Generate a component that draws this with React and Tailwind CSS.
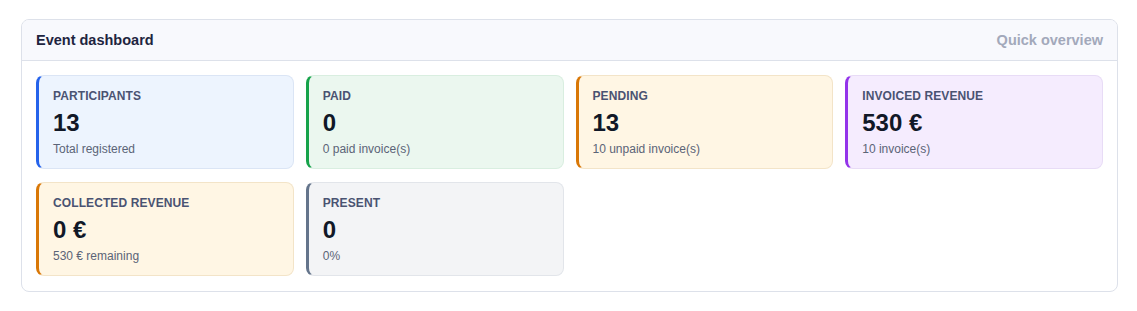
export default function App() {
  const cards = [
    { label: "Participants", value: "13", sub: "Total registered", cls: "bg-[#edf4fe] border-[#dbe5f5] border-l-[#2563eb]" },
    { label: "Paid", value: "0", sub: "0 paid invoice(s)", cls: "bg-[#ebf7ef] border-[#d9eee0] border-l-[#16a34a]" },
    { label: "Pending", value: "13", sub: "10 unpaid invoice(s)", cls: "bg-[#fff6e4] border-[#f3e4c8] border-l-[#d97706]" },
    { label: "Invoiced revenue", value: "530 €", sub: "10 invoice(s)", cls: "bg-[#f5ecfe] border-[#e8dcf6] border-l-[#9333ea]" },
    { label: "Collected revenue", value: "0 €", sub: "530 € remaining", cls: "bg-[#fff6e4] border-[#f3e4c8] border-l-[#d97706]" },
    { label: "Present", value: "0", sub: "0%", cls: "bg-[#f3f4f6] border-[#e2e5ea] border-l-[#64748b]" },
  ];
  return (
    <div className="bg-white w-[1137px] h-[311px] pt-[19px] pl-[21px]" style={{ fontFamily: '"Liberation Sans", Arial, sans-serif' }}>
      <div className="w-[1097px] border border-[#dde1ea] rounded-lg overflow-hidden bg-white">
        <div className="h-[41px] pt-[1px] flex items-center justify-between px-[14px] bg-[#f8f9fd] border-b border-[#dde1ea]">
          <div className="text-[14.5px] font-bold text-[#1e2540]">Event dashboard</div>
          <div className="text-[14.5px] font-bold text-[#a3a9bb]">Quick overview</div>
        </div>
        <div className="pt-[14px] px-[14px] pb-[15px] grid grid-cols-4 gap-x-[12px] gap-y-[13px]">
          {cards.map((c) => (
            <div key={c.label} className={`h-[94px] rounded-lg border border-l-[3px] pl-[14px] pr-3 pt-[13px] ${c.cls}`}>
              <div className="text-[12px] leading-[14px] font-bold uppercase text-[#4a5372] tracking-[0.1px]">{c.label}</div>
              <div className="text-[24px] leading-[30px] font-bold text-[#111827] mt-[5px]">{c.value}</div>
              <div className="text-[12px] leading-[16px] text-[#5b6477] mt-[3px]">{c.sub}</div>
            </div>
          ))}
        </div>
      </div>
    </div>
  );
}
